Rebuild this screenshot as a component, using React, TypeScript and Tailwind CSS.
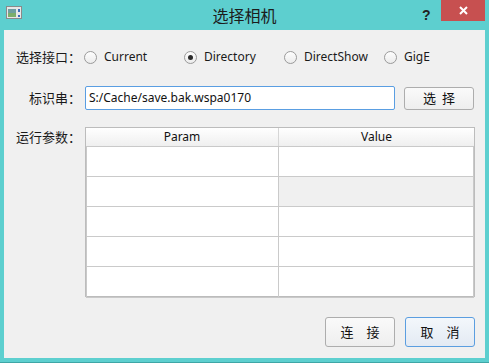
import React from "react";

const cjk = '"Noto Sans CJK SC", "Noto Sans", sans-serif';
const latin = '"Noto Sans", "Noto Sans CJK SC", sans-serif';

function Radio({ label, checked, last }: { label: string; checked?: boolean; last?: boolean }) {
  return (
    <div className={`flex items-center shrink-0 ${last ? "" : "w-[100px]"}`}>
      <span className="w-[13px] h-[13px] rounded-full border border-[#9a9a9a] bg-gradient-to-b from-[#fdfdfd] to-[#ececec] flex items-center justify-center">
        {checked && <span className="w-[5px] h-[5px] rounded-full bg-[#2b2b2b]" />}
      </span>
      <span className="ml-[7px] text-[12px] text-[#1a1a1a]" style={{ fontFamily: latin }}>
        {label}
      </span>
    </div>
  );
}

function Label({ text }: { text: string }) {
  return (
    <div className="w-[65px] shrink-0 flex justify-end whitespace-nowrap text-[13px] text-[#1a1a1a]">
      <span>{text}</span>
      <span className="inline-block w-[13px] text-left">：</span>
    </div>
  );
}

function Btn({ chars, gap, h, primary }: { chars: string[]; gap: string; h: string; primary?: boolean }) {
  return (
    <button
      className={`w-[70px] shrink-0 ${h} rounded-[3px] border flex items-center justify-center text-[13px] text-[#111] ${gap} ${
        primary
          ? "border-[#5b9ee0] bg-gradient-to-b from-[#f3f7fb] to-[#e3eaf3]"
          : "border-[#adadad] bg-gradient-to-b from-[#fafafa] to-[#eeeeee]"
      }`}
      style={{ fontFamily: cjk }}
    >
      {chars.map((c) => (
        <span key={c}>{c}</span>
      ))}
    </button>
  );
}

export default function App() {
  const rows = [0, 1, 2, 3, 4];
  return (
    <div className="w-[489px] h-[363px] bg-[#5dcfcf] flex flex-col border-b border-[#3fa6a6]">
      {/* Title bar */}
      <div className="h-[30px] flex items-start relative">
        <svg className="absolute left-[6px] top-[6px]" width="16" height="13" viewBox="0 0 16 13">
          <rect x="0.5" y="0.5" width="15" height="12" fill="#e8e8e8" stroke="#8a8a8a" />
          <rect x="2" y="3" width="8" height="8" fill="#6e9fa0" />
          <rect x="2" y="7" width="8" height="4" fill="#7cae6a" />
          <rect x="12" y="3" width="2" height="3" fill="#3a6db5" />
          <rect x="12" y="9" width="2" height="2" fill="#3a6db5" />
        </svg>
        <div
          className="flex-1 text-center text-[16px] leading-[30px] text-[#1c1c1c]"
          style={{ fontFamily: cjk }}
        >
          选择相机
        </div>
        <span
          className="absolute left-[422px] top-[5px] text-[14px] font-bold text-[#222]"
          style={{ fontFamily: '"Liberation Sans", sans-serif' }}
        >
          ?
        </span>
        <div className="absolute right-[4px] top-0 w-[44px] h-[21px] bg-[#c75050] flex items-center justify-center">
          <svg width="9" height="9" viewBox="0 0 9 9">
            <path d="M1 1 L8 8 M8 1 L1 8" stroke="#fff" strokeWidth="2" />
          </svg>
        </div>
      </div>

      {/* Content */}
      <div className="mx-[4px] h-[328px] bg-[#f0f0f0] flex flex-col pl-[12px] pr-[10px] pt-[15px]" style={{ fontFamily: cjk }}>
        <div className="flex items-center h-[24px]">
          <Label text="选择接口" />
          <div className="flex ml-[3px]">
            <Radio label="Current" />
            <Radio label="Directory" checked />
            <Radio label="DirectShow" />
            <Radio label="GigE" last />
          </div>
        </div>

        <div className="flex items-center h-[24px] mt-[17px]">
          <Label text="标识串" />
          <div
            className="ml-[4px] shrink-0 w-[310px] h-[24px] border border-[#5a9ee2] rounded-[2px] bg-white flex items-center pl-[3px] text-[12px] text-[#111]"
            style={{ fontFamily: latin }}
          >
            S:/Cache/save.bak.wspa0170
          </div>
          <div className="ml-[9px]">
            <Btn chars={["选", "择"]} gap="gap-[6px]" h="h-[23px]" />
          </div>
        </div>

        <div className="flex items-start mt-[17px]">
          <div className="leading-[20px]">
            <Label text="运行参数" />
          </div>
          <div className="ml-[4px] shrink-0 w-[390px] h-[170px] border border-[#bcbcbc] bg-white flex flex-col">
            <div className="h-[19px] flex border-b border-[#c9c9c9] bg-gradient-to-b from-[#ffffff] to-[#efefef] text-[12px] text-[#111]" style={{ fontFamily: latin }}>
              <div className="w-[193px] border-r border-[#d6d6d6] flex items-center justify-center">Param</div>
              <div className="flex-1 flex items-center justify-center">Value</div>
            </div>
            <div className="flex-1 border-l border-[#c9c9c9] border-r border-b flex flex-col">
              {rows.map((r) => (
                <div key={r} className={`h-[30px] flex ${r < 4 ? "border-b border-[#cacaca]" : ""}`}>
                  <div className="w-[192px] border-r border-[#cacaca]" />
                  <div className={`flex-1 ${r === 1 ? "bg-[#f0f0f0]" : ""}`} />
                </div>
              ))}
            </div>
          </div>
        </div>

        <div className="flex justify-end gap-[10px] mt-[20px]">
          <Btn chars={["连", "接"]} gap="gap-[13px]" h="h-[30px]" />
          <Btn chars={["取", "消"]} gap="gap-[13px]" h="h-[30px]" primary />
        </div>
      </div>
    </div>
  );
}
